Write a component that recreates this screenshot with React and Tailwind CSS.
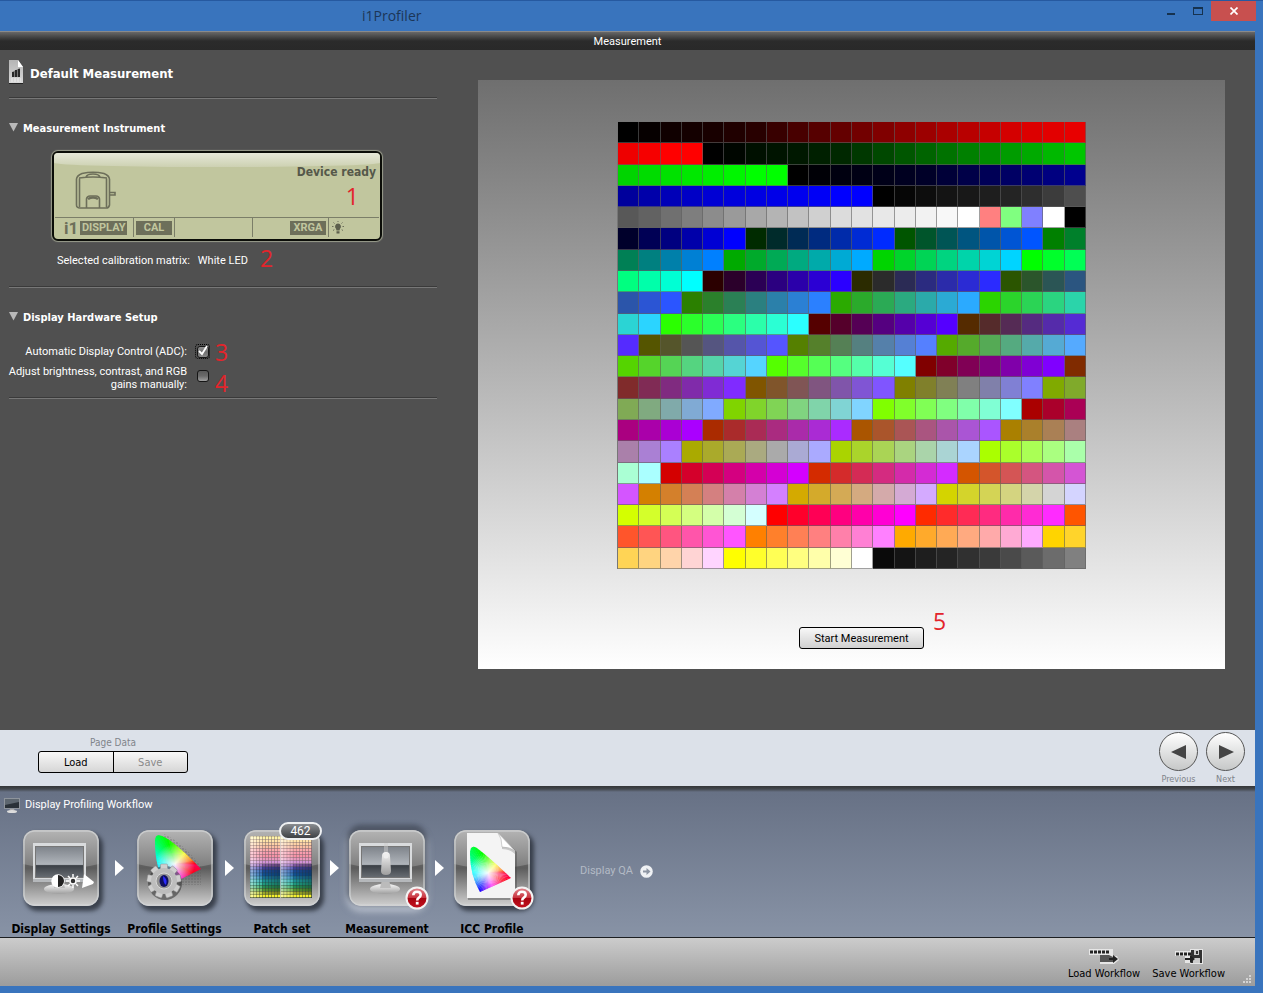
import React, { useState } from "react";

// RAMP drives the red, green and blue series, GREYS the neutral one
const RAMP = [
  0, 6, 16, 20, 24, 32, 40, 56, 72, 86, 100, 114, 128, 142, 156, 170, 184, 198,
  212, 220, 226, 232, 238, 246, 255, 255,
];
const GREYS = [
  0, 6, 13, 20, 24, 30, 36, 46, 60, 78, 88, 98, 112, 126, 140, 154, 168, 180,
  194, 208, 220, 226, 232, 236, 242, 248, 255,
];
const CUBE = [0, 43, 85, 128, 170, 212, 255];
const TAIL = [10, 20, 30, 36, 48, 58, 74, 90, 108, 128];

const rgb = (r, g, b) => `rgb(${r}, ${g}, ${b})`;

const patches = [
  ...RAMP.map((v) => rgb(v, 0, 0)),
  ...RAMP.map((v) => rgb(0, v, 0)),
  ...RAMP.map((v) => rgb(0, 0, v)),
  ...GREYS.map((v) => rgb(v, v, v)),
  rgb(255, 128, 128),
  rgb(128, 255, 128),
  rgb(128, 128, 255),
  rgb(255, 255, 255),
  ...CUBE.flatMap((r) => CUBE.flatMap((g) => CUBE.map((b) => rgb(r, g, b)))),
  ...TAIL.map((v) => rgb(v, v, v)),
];

const boldFont = "font-['DejaVu_Sans_Condensed','DejaVu_Sans',sans-serif] font-bold";

const Note = ({ className, children }) => (
  <span
    className={`absolute font-['Open_Sans','Noto_Sans',sans-serif] text-[23px] leading-6 text-[#e3242b] ${className}`}
  >
    {children}
  </span>
);

const Divider = () => (
  <div className="h-[2px] border-t border-b border-t-[#3a3a3a] border-b-[#777777]" />
);

function Section({ title, children }) {
  const [open, setOpen] = useState(true);
  return (
    <section>
      <h2>
        <button
          type="button"
          aria-expanded={open}
          onClick={() => setOpen(!open)}
          className={`flex h-4 items-center gap-[5px] text-[11px] leading-4 text-white ${boldFont}`}
        >
          <svg width="9" height="14" viewBox="0 0 9 14">
            <path d="M0 1h9L4.500 9.500z" fill="#b9b9b9" />
          </svg>
          {title}
        </button>
      </h2>
      {open && children}
    </section>
  );
}

function CheckBox({ id, focused, ...props }) {
  return (
    <span
      className={`relative flex size-[13px] items-center justify-center rounded-[2px] ${
        focused ? "outline-1 outline-dotted outline-black" : ""
      }`}
    >
      <input
        id={id}
        type="checkbox"
        className="peer size-[12px] appearance-none rounded-[3px] border border-[#161616] bg-linear-to-b from-[#5a5a5a] via-[#6a6a6a] to-[#a0a0a0] checked:from-[#909090] checked:via-[#707070] checked:to-[#8a8a8a]"
        {...props}
      />
      <svg
        className="pointer-events-none absolute top-0 left-0 hidden peer-checked:block"
        width="13"
        height="13"
        viewBox="0 0 13 13"
      >
        <path d="M3 6l3 3 5-8" fill="none" stroke="#fff" strokeWidth="1.800" />
      </svg>
    </span>
  );
}

function TitleBar() {
  return (
    <header className="flex h-[31px] items-start border-t border-t-[#2659a0] pr-[7px] pl-[362px] text-[#16324f]">
      <h1 className="flex-1 pt-[5px] font-['Open_Sans','Noto_Sans',sans-serif] text-[14px] leading-5 text-[#1c3657]">
        i1Profiler
      </h1>
      <button type="button" aria-label="Minimize" className="flex h-5 w-[27px] justify-center">
        <svg width="8" height="20" viewBox="0 0 8 20">
          <path d="M0 12h8v2H0z" fill="currentColor" />
        </svg>
      </button>
      <button type="button" aria-label="Maximize" className="flex h-5 w-[27px] justify-center">
        <svg width="10" height="20" viewBox="0 0 10 20">
          <path d="M0 6h10v8H0zM1 8v5h8V8z" fill="currentColor" fillRule="evenodd" />
        </svg>
      </button>
      <button type="button" aria-label="Close" className="flex h-5 w-[45px] items-center justify-center bg-[#c8504f]">
        <svg width="8" height="8" viewBox="0 0 8 8">
          <path d="M.500.500l7 7m0-7l-7 7" stroke="#fff" strokeWidth="1.700" />
        </svg>
      </button>
    </header>
  );
}

// LCD style status panel of the instrument
function InstrumentPanel() {
  return (
    <div className="relative flex h-[90px] w-[330px] flex-col rounded-md border-2 border-[#0b0d08] bg-[#c1c69e] px-px shadow-[0_0_1px_1px_#9a9d8c]">
      <div className="absolute inset-x-0 top-0 h-[14px] rounded-[50%_50%_50%_50%/0_0_30%_30%] rounded-t-sm bg-linear-to-b from-[#e6e8d8] to-[#cdd1b2]" />
      <div className="relative flex flex-1 justify-between pl-5">
        <svg className="mt-[18px]" width="42" height="40" viewBox="0 0 42 40" fill="none" stroke="#6d6f5a" strokeWidth="1.600">
          <path d="M1.500 8Q2 4.500 7 2.500Q18 0 29 2.500Q34 4.500 34.500 8V34Q34 37 31 37H5Q1.500 37 1.500 34z" />
          <path d="M4.500 7.500V36M31.500 7.500V36M4 7Q18 5 32 7M11 6Q12 3 18 3Q24 3 25 6" />
          <path d="M34.500 21.500H40v2.500H34.500" />
          <path d="M11.500 37V28Q12 25 15 25H21Q24 25 24.500 28V37" />
          <path d="M13 28Q18 25 23 28" strokeWidth="2.500" />
        </svg>
        <p className={`pt-[11px] pr-[3px] text-[12px] leading-4 text-[#55584a] ${boldFont}`}>
          Device ready
        </p>
        <Note className="top-[31px] right-5">1</Note>
      </div>
      <div className="flex h-[22px] border-t border-[#7b7e68] pb-[2px] font-['Liberation_Sans_Narrow','Roboto',sans-serif] text-[11px] leading-[14px] font-bold text-[#c1c69e]">
        <div className="flex w-[79px] items-center gap-[2px] border-r border-[#7b7e68] pl-[9px]">
          <span className="text-[17px] text-[#6d6f5a]">i1</span>
          <span className="w-[47px] bg-[#6d6f5a] text-center">DISPLAY</span>
        </div>
        <div className="flex w-[41px] items-center border-r border-[#7b7e68] pl-[2px]">
          <span className="w-9 bg-[#6d6f5a] text-center">CAL</span>
        </div>
        <div className="w-[78px] border-r border-[#7b7e68]" />
        <div className="flex flex-1 items-center justify-end border-r border-[#7b7e68] pr-[2px]">
          <span className="w-9 bg-[#6d6f5a] text-center">XRGA</span>
        </div>
        <div className="flex w-[50px] items-center pl-[3px]">
          <svg width="12" height="14" viewBox="0 0 12 14">
            <path d="M6 2.500a3 3 0 0 1 2 5.200L7.500 9.500h-3L4 7.700a3 3 0 0 1 2-5.200zM4.500 10.300h3v2.200h-3z" fill="#5d5f4c" />
            <path d="M6 0v1M1.500 1.500l1 1M10.500 1.500l-1 1M0 5.500h1.500M10.500 5.500H12M1 9.500l1.300-.800M11 9.500l-1.300-.800" stroke="#6d6f5a" />
          </svg>
        </div>
      </div>
    </div>
  );
}

function SettingsPanel() {
  return (
    <aside className="w-[437px] shrink-0 pt-[9px] pl-[9px] text-[11px] leading-[13px] text-white">
      <div className="mb-3 flex h-[26px] items-end gap-[7px]">
        <svg width="14" height="26" viewBox="0 0 14 26">
          <defs>
            <linearGradient id="doc" x1="0" y1="0" x2="0" y2="1">
              <stop offset="0" stopColor="#b5b5b5" />
              <stop offset="1" stopColor="#d8d8d8" />
            </linearGradient>
          </defs>
          <path d="M0 1h9l5 7v16H0z" fill="url(#doc)" />
          <path d="M9 1v7h5z" fill="#fff" />
          <path d="M3 13h2v5H3zM6 11h2v7H6zM9 10h2v8H9z" fill="#292929" />
          <path d="M3 13l8-4v9H3z" fill="#292929" opacity=".5" />
          <path d="M2 20h10M2 22h10" stroke="#eee" strokeDasharray="2 1" />
          <path d="M0 24.500h14" stroke="#222" />
        </svg>
        <h2 className={`text-[13px] leading-[22px] ${boldFont}`}>Default Measurement</h2>
      </div>
      <Divider />
      <div className="pt-[22px] pb-[19px]">
        <Section title="Measurement Instrument">
          <div className="mt-[14px] pl-[43px]">
            <InstrumentPanel />
            <p className="relative mt-[13px] flex gap-2 pl-[5px]">
              <span>Selected calibration matrix:</span>
              <span>White LED</span>
              <Note className="-top-2 left-[208px]">2</Note>
            </p>
          </div>
        </Section>
      </div>
      <Divider />
      <div className="pt-[22px] pb-[6px]">
        <Section title="Display Hardware Setup">
          <div className="relative mt-[19px] -ml-1 grid grid-cols-[182px_1fr] gap-x-[9px] gap-y-[7px]">
            <label htmlFor="adc" className="text-right">
              Automatic Display Control (ADC):
            </label>
            <CheckBox id="adc" defaultChecked focused />
            <label htmlFor="manual" className="text-right">
              Adjust brightness, contrast, and RGB gains manually:
            </label>
            <div className="pt-1">
              <CheckBox id="manual" />
            </div>
            <Note className="-top-[5px] left-[210px]">3</Note>
            <Note className="top-[26px] left-[210px]">4</Note>
          </div>
        </Section>
      </div>
      <Divider />
    </aside>
  );
}

function PatchChart() {
  return (
    <div className="grid h-[448px] w-full max-w-[469px] grid-cols-[repeat(22,minmax(0,1fr))] border-t border-l border-[#777]">
      {patches.map((color, i) => (
        <div key={i} className="border-r border-b border-[#606060]/60" style={{ backgroundColor: color }} />
      ))}
    </div>
  );
}

const Tile = ({ children, active }) => (
  <svg
    className={`rounded-xl ${
      active
        ? "shadow-[0_-3px_5px_2px_rgba(40,46,60,0.6),0_3px_6px_3px_rgba(220,225,235,0.55)]"
        : "shadow-[3px_4px_4px_1px_rgba(35,40,50,0.75)]"
    }`}
    width="76"
    height="76"
    viewBox="0 0 76 76"
  >
    <rect width="76" height="76" rx="11" fill="url(#tile)" />
    <path d="M0 11Q0 0 11 0H65Q76 0 76 11V34Q38 43 0 34z" fill="url(#gloss)" />
    <rect x="1" y="1" width="74" height="74" rx="10" fill="none" stroke="#d2d4d6" strokeWidth="1.500" opacity=".75" />
    {children}
  </svg>
);

function SharedDefs() {
  return (
    <svg className="absolute" width="0" height="0" aria-hidden="true">
      <defs>
        <linearGradient id="tile" x1="0" y1="0" x2="0" y2="1">
          <stop offset="0" stopColor="#999" />
          <stop offset=".5" stopColor="#5c5c5c" />
          <stop offset="1" stopColor="#d0d0d0" />
        </linearGradient>
        <linearGradient id="gloss" x1="0" y1="0" x2="0" y2="1">
          <stop offset="0" stopColor="#b4b4b4" />
          <stop offset="1" stopColor="#7c7c7c" />
        </linearGradient>
        <linearGradient id="screen" x1="0" y1="0" x2="0" y2="1">
          <stop offset="0" stopColor="#7f848b" />
          <stop offset=".58" stopColor="#b0b5bb" />
          <stop offset=".62" stopColor="#3b4046" />
          <stop offset="1" stopColor="#666b71" />
        </linearGradient>
        <linearGradient id="metal" x1="0" y1="0" x2="0" y2="1">
          <stop offset="0" stopColor="#f6f6f6" />
          <stop offset="1" stopColor="#9e9e9e" />
        </linearGradient>
        <linearGradient id="red" x1="0" y1="0" x2="0" y2="1">
          <stop offset="0" stopColor="#e28b92" />
          <stop offset=".48" stopColor="#c9343f" />
          <stop offset=".52" stopColor="#a80410" />
          <stop offset="1" stopColor="#c41220" />
        </linearGradient>
        <radialGradient id="white">
          <stop offset="0" stopColor="#fff" stopOpacity=".95" />
          <stop offset="1" stopColor="#fff" stopOpacity="0" />
        </radialGradient>
        <pattern id="mesh" width="3" height="3" patternUnits="userSpaceOnUse">
          <circle cx="1" cy="1" r=".8" fill="#555" />
        </pattern>
      </defs>
    </svg>
  );
}

// [angle in degrees, hue] pairs going round the white point
const HUES = [
  [0, -20],
  [25, -5],
  [60, -45],
  [115, -120],
  [160, -170],
  [200, -190],
  [245, -235],
  [300, -290],
  [345, -335],
  [360, -380],
];

const hueAt = (angle) => {
  const i = HUES.findIndex(([a]) => a >= angle) || 1;
  const [a0, h0] = HUES[i - 1];
  const [a1, h1] = HUES[i];
  return h0 + ((angle - a0) / (a1 - a0)) * (h1 - h0);
};

function Gamut({ id, path, cx, cy }) {
  const wedges = Array.from({ length: 72 }, (_, i) => i * 5);
  const at = (deg) =>
    `${cx + 70 * Math.cos((deg * Math.PI) / 180)} ${cy + 70 * Math.sin((deg * Math.PI) / 180)}`;
  return (
    <g clipPath={`url(#${id})`}>
      <clipPath id={id}>
        <path d={path} />
      </clipPath>
      {wedges.map((deg) => (
        <path
          key={deg}
          d={`M${cx} ${cy}L${at(deg)}L${at(deg + 6)}z`}
          fill={`hsl(${hueAt(deg) + 360} 100% 50%)`}
        />
      ))}
      <circle cx={cx} cy={cy} r="20" fill="url(#white)" />
    </g>
  );
}

const Monitor = () => (
  <>
    <ellipse cx="36" cy="59" rx="15" ry="5" fill="url(#metal)" />
    <path d="M33 50h7l2 8H31z" fill="#bbb" />
    <rect x="10" y="13" width="53" height="39" fill="#d9dbdd" />
    <rect x="10" y="49" width="53" height="3" fill="#b5b8bb" />
    <rect x="12" y="16" width="49" height="32" fill="#777" />
    <rect x="13" y="17" width="47" height="30" fill="url(#screen)" />
  </>
);

const DisplaySettingsIcon = () => (
  <Tile>
    <Monitor />
    <circle cx="35" cy="51" r="6" fill="none" stroke="#fff" strokeWidth="1.500" />
    <path d="M35 45a6 6 0 0 0 0 12z" fill="#fff" />
    <path d="M35 45a6 6 0 0 1 0 12z" fill="#222" />
    <circle cx="50" cy="51" r="3" fill="#333" stroke="#fff" strokeWidth="1.500" />
    <path d="M50 44v3M50 55v3M43 51h3M54 51h3M45 46l2 2M53 54l2 2M45 56l2-2M53 48l2-2" stroke="#fff" strokeWidth="1.500" />
    <path d="M61 44l10 8-1 2-11 4z" fill="#fff" />
  </Tile>
);

const ProfileSettingsIcon = () => (
  <Tile>
    <path d="M27 4Q45 12 64 36V55H30z" fill="url(#mesh)" opacity=".6" />
    <Gamut id="gamut-a" path="M18 11Q18 3 25 6Q36 10 64 39L30 56Q18 40 18 11z" cx={38} cy={34} />
    <circle cx="28" cy="53" r="17" fill="#222" opacity=".5" />
    {[0, 40, 80, 120, 160, 200, 240, 280, 320].map((deg) => (
      <rect key={deg} x="23.500" y="34" width="7" height="8" rx="1" fill="#cfcfcf" stroke="#8b8b8b" strokeWidth=".5" transform={`rotate(${deg} 27 51)`} />
    ))}
    <circle cx="27" cy="51" r="13" fill="#bdbdbd" />
    <circle cx="27" cy="51" r="8" fill="#949494" stroke="#d8d8d8" />
    <ellipse cx="27" cy="51" rx="4.500" ry="6" fill="#101060" />
    <path d="M26 46q5 3 3 9q-3-2-3-9z" fill="#2b2bff" />
  </Tile>
);

const ROW_COLORS = [
  "#fff3a8", "#ffe3a8", "#fdd2a6", "#fbc0a4", "#fbabab", "#f99cae", "#f794a8",
  "#ea98bc", "#d292d6", "#9a68bd", "#4f4db0", "#1f58b0", "#1460ae", "#1f86b2",
  "#22adae", "#24b598", "#2fa863", "#66b03c", "#bcc82e", "#f6f02c",
];

const PatchSetIcon = () => (
  <Tile>
    <rect x="6" y="6" width="62" height="62" fill="#6b5f66" />
    <rect x="6" y="34" width="62" height="34" fill="#23343c" />
    {ROW_COLORS.map((color, y) =>
      Array.from({ length: 20 }, (_, x) => (
        <g key={`${x}-${y}`}>
          <rect x={6.3 + x * 3.07} y={6.3 + y * 3.07} width="2.700" height="2.700" fill={color} />
          <rect
            x={6.3 + x * 3.07}
            y={6.3 + y * 3.07}
            width="2.700"
            height="2.700"
            fill={x % 10 < 4 ? "#fff" : "#000"}
            opacity={x % 10 < 4 ? 0.5 - (x % 10) * 0.12 : y > 8 && y < 19 ? (x % 10) * 0.04 : 0}
          />
        </g>
      ))
    )}
    <rect x="36" y="6" width="1" height="62" fill="#eee" opacity=".6" />
  </Tile>
);

const MeasurementIcon = () => (
  <Tile active>
    <Monitor />
    <path d="M36 13v10M38 13v10" stroke="#ccc" />
    <path d="M33 26q0-4 4-4t4 4l1 15q0 4-5 4t-5-4z" fill="url(#metal)" />
    <circle cx="37" cy="26" r="2.500" fill="#eee" />
  </Tile>
);

const IccProfileIcon = () => (
  <Tile>
    <path d="M14 5h31l18 17v48H14z" fill="#444" opacity=".4" />
    <path d="M13 3h31l17 18v47H13z" fill="#f4f4f4" />
    <path d="M44 3q4 5 4 14q8 0 13 4z" fill="#fff" stroke="#bbb" strokeWidth=".7" />
    <path d="M48 19q8 0 13 5v-3q-5-4-13-4z" fill="#aaa" opacity=".6" />
    <Gamut id="gamut-b" path="M16 24Q16 15 21 17Q27 20 57 48L26 62Q16 45 16 24z" cx={34} cy={43} />
  </Tile>
);

const steps = [
  { label: "Display Settings", icon: DisplaySettingsIcon, width: "w-[108px]" },
  { label: "Profile Settings", icon: ProfileSettingsIcon, width: "w-[101px]" },
  { label: "Patch set", icon: PatchSetIcon, width: "w-24", count: 462 },
  { label: "Measurement", icon: MeasurementIcon, width: "w-24", pending: true },
  { label: "ICC Profile", icon: IccProfileIcon, width: "w-24", pending: true },
];

function Step({ step }) {
  const Icon = step.icon;
  return (
    <button type="button" className={`flex flex-col items-center gap-4 ${step.width}`}>
      <span className="relative">
        <Icon />
        {step.count && (
          <span className="absolute -top-2 left-[35px] flex h-[18px] w-[43px] items-center justify-center rounded-full border-2 border-[#eef0f2] bg-linear-to-b from-[#8a8d91] to-[#3e4145] text-[12px] text-white">
            {step.count}
          </span>
        )}
        {step.pending && (
          <svg className="absolute top-14 left-14" width="24" height="24" viewBox="0 0 24 24">
            <circle cx="12" cy="12" r="10.500" fill="url(#red)" stroke="#f3f3f3" strokeWidth="2" />
            <path d="M8.300 9.200q0-3.400 3.700-3.400t3.700 3q0 1.700-1.800 2.800q-1.700 1-1.700 2.800" fill="none" stroke="#fff" strokeWidth="2.600" />
            <rect x="10.800" y="15.800" width="2.800" height="2.800" fill="#fff" />
          </svg>
        )}
      </span>
      <span className={`text-[12px] leading-[15px] whitespace-nowrap text-black ${boldFont}`}>
        {step.label}
      </span>
    </button>
  );
}

const StepArrow = () => (
  <svg className="mt-[29px] shrink-0" width="9" height="18" viewBox="0 0 9 18">
    <path d="M0 1l9 8-9 8z" fill="#fff" />
  </svg>
);

function WorkflowBar() {
  return (
    <nav className="border-b border-b-[#1d1f22] bg-linear-to-b from-[#667084] to-[#8893a6]">
      <div className="h-[6px] bg-linear-to-b from-[#343638] via-[#43474d] to-transparent" />
      <div className="flex h-[26px] items-center gap-[5px] pl-1 text-[11px] leading-4 text-white">
        <svg width="16" height="15" viewBox="0 0 16 15">
          <path d="M0 0h16v11H0z" fill="#8e949c" />
          <path d="M1 1h14v9H1z" fill="#2a3138" />
          <path d="M1 1h14v3L1 7z" fill="#5d666f" />
          <path d="M6 11h4l1 2H5z" fill="#aaa" />
          <ellipse cx="8" cy="13.500" rx="5" ry="1.500" fill="#ddd" />
        </svg>
        Display Profiling Workflow
      </div>
      <div className="flex items-start pt-3 pl-[7px]">
        {steps.map((step, i) => (
          <React.Fragment key={step.label}>
            {i > 0 && <StepArrow />}
            <Step step={step} />
          </React.Fragment>
        ))}
        <button type="button" className="mt-[33px] ml-10 flex items-center gap-[7px] text-[11px] leading-4 text-[#b3bac5]">
          Display QA
          <svg width="13" height="13" viewBox="0 0 13 13">
            <circle cx="6.500" cy="6.500" r="6.300" fill="#eff1f4" />
            <path d="M3 5.500h3.500V3l4 3.500-4 3.500V7.500H3z" fill="#8d95a3" />
          </svg>
        </button>
      </div>
    </nav>
  );
}

const RoundButton = ({ label, path }) => (
  <button type="button" className="flex w-[47px] flex-col items-center gap-[3px] text-[9px] leading-[10px] text-[#808489]">
    <span className="flex size-[39px] items-center justify-center rounded-full border border-[#555] bg-linear-to-b from-white to-[#c6c8c8]">
      <svg width="16" height="16" viewBox="0 0 16 16">
        <path d={path} fill="#454545" />
      </svg>
    </span>
    {label}
  </button>
);

function PageDataBar() {
  return (
    <div className="flex h-14 items-start justify-between bg-[#dce1e9] pt-[2px] pr-[6px] pl-[38px] font-['DejaVu_Sans_Condensed','DejaVu_Sans',sans-serif]">
      <div className="w-[150px] pt-[5px] text-center">
        <p className="mb-[2px] text-[10px] leading-3 text-[#808489]">Page Data</p>
        <div className="flex h-[22px] overflow-hidden rounded-[3px] border border-black bg-linear-to-b from-[#f8f8f8] to-[#d6d6d6] text-[11px] leading-5">
          <button type="button" className="flex-1 border-r border-black pt-px text-black">
            Load
          </button>
          <button type="button" disabled className="flex-1 pt-px text-[#8a8a8a]">
            Save
          </button>
        </div>
      </div>
      <div className="flex">
        <RoundButton label="Previous" path="M0 8L15 1v14z" />
        <RoundButton label="Next" path="M16 8L1 1v14z" />
      </div>
    </div>
  );
}

function FooterBar() {
  return (
    <footer className="relative flex h-12 items-start justify-end gap-3 bg-linear-to-b from-[#cccccc] to-[#9c9c9c] pt-[11px] pr-[30px] font-['DejaVu_Sans_Condensed','DejaVu_Sans',sans-serif] text-[11px] leading-3 text-black">
      <button type="button" className="flex flex-col items-center gap-[3px]">
        <svg width="30" height="16" viewBox="0 0 30 16">
          <path d="M0 0h24v7h4l2 4-5 4H11V6H0z" fill="#e6e6e6" />
          <path d="M1 3h20" stroke="#222" strokeWidth="3" strokeDasharray="3 1" />
          <path d="M11 6h9l4 2v5H11z" fill="#555" />
          <path d="M20 9h4V6l5 4-5 4v-3h-4z" fill="#222" />
        </svg>
        Load Workflow
      </button>
      <button type="button" className="flex flex-col items-center gap-[3px]">
        <svg width="28" height="16" viewBox="0 0 28 16">
          <path d="M0 2h15V0h13v15H15v-1h-5V7H0z" fill="#e6e6e6" />
          <path d="M1 5h15" stroke="#222" strokeWidth="3" strokeDasharray="3 1" />
          <path d="M16 1h11v13H16z" fill="#333" />
          <path d="M19 1h5v5h-5zM18 9h7v5h-7z" fill="#ccc" />
          <path d="M21 2h2v3h-2z" fill="#333" />
          <path d="M10 9h5V6l5 4-5 4v-3h-5z" fill="#222" />
        </svg>
        Save Workflow
      </button>
      <svg className="absolute right-[3px] bottom-[2px]" width="9" height="9" viewBox="0 0 9 9">
        <path d="M6 0h2v2H6zM3 3h2v2H3zM6 3h2v2H6zM0 6h2v2H0zM3 6h2v2H3zM6 6h2v2H6z" fill="#d4d4d4" />
      </svg>
    </footer>
  );
}

function App() {
  return (
    <div className="flex min-h-screen flex-col bg-[#3974bd] pb-2 font-['Roboto','DejaVu_Sans_Condensed',sans-serif]">
      <SharedDefs />
      <TitleBar />
      <div className="mr-2 flex flex-1 flex-col">
        <div className="h-[19px] border-t border-t-[#8a8a8a] bg-linear-to-b from-[#686868] via-[#2b2b2b] to-[#292929] text-center text-[11px] leading-[19px] text-white">
          Measurement
        </div>
        <main className="flex flex-1 items-start bg-[#505050]">
          <SettingsPanel />
          <section className="mt-[30px] mr-[30px] mb-[61px] ml-[41px] flex min-w-0 flex-1 flex-col items-center bg-linear-to-b from-[#6f6f6f] to-white px-5 pt-[41px] pb-5">
            <PatchChart />
            <div className="relative mt-[58px] ml-5 flex">
              <button
                type="button"
                className="h-[22px] w-[125px] rounded-[3px] border border-black bg-linear-to-b from-[#f8f8f8] to-[#d0d0d0] pt-px text-[11px] leading-5 text-black"
              >
                Start Measurement
              </button>
              <Note className="-top-[18px] left-[134px]">5</Note>
            </div>
          </section>
        </main>
        <PageDataBar />
        <WorkflowBar />
        <FooterBar />
      </div>
    </div>
  );
}

export default App;
